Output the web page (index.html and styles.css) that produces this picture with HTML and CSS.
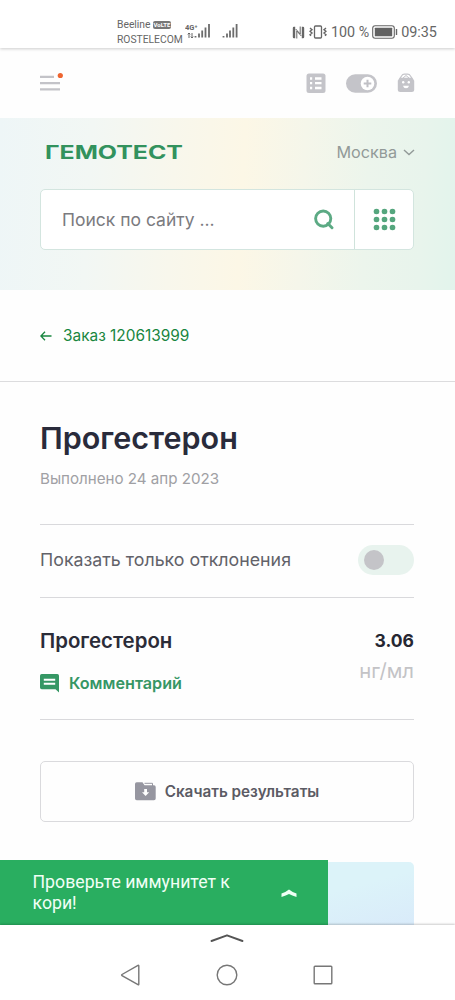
FILE: index.html
```html
<!DOCTYPE html>
<html lang="ru">
<head>
<meta charset="utf-8">
<title>Гемотест</title>
<link rel="stylesheet" href="styles.css">
</head>
<body>
<div class="phone">
  <div class="status">
    <div class="carriers">
      <div class="carrier">Beeline <span class="volte">VoLTE</span></div>
      <div class="carrier second">ROSTELECOM</div>
    </div>
    <svg class="signals" width="54" height="18" viewBox="0 0 54 18">
      <text x="0" y="7" class="net">4G⁺</text>
      <path d="M4 10v5M2.7 11.3 4 10l1.3 1.3M7 10v5M5.700 13.700 7 15l1.300-1.300" fill="none" stroke="#666" stroke-width="1"/>
      <path d="M10.500 13v1.500M14 10.500v4M17.200 7.500v7M20.500 4.500v10M24 1v13.500M38.500 13v1.500M42 10.500v4M45 7.500v7M48.300 4.500v10M51.600 1v13.500" stroke="#6c6c6c" stroke-width="1.800"/>
    </svg>
    <div class="status-right">
      <svg width="13" height="13" viewBox="0 0 13 13"><path d="M3.200.8H2Q.8.800.8 2v9Q.8 12.200 2 12.200h1.200zM9.800 12.200H11q1.200 0 1.200-1.200V2Q12.200.8 11 .8H9.800z" fill="#666"/><path d="M4.800 12.500V5l4.500 5M8.200.5V8L3.700 3" fill="none" stroke="#666" stroke-width="1"/></svg>
      <svg width="18" height="14" viewBox="0 0 18 14"><rect x="5.500" y="1" width="7" height="12" rx="1" fill="none" stroke="#666" stroke-width="1.300"/><path d="M1 3l2 1.700-2 1.600 2 1.700-2 1.700 1 1M17 3l-2 1.700 2 1.600-2 1.700 2 1.700-1 1" fill="none" stroke="#666" stroke-width="1.400"/></svg>
      <span class="pct">100 %</span>
      <svg width="26" height="14" viewBox="0 0 26 14"><rect x=".7" y=".7" width="21.600" height="12.600" rx="2.500" fill="none" stroke="#666" stroke-width="1.100"/><rect x="2.800" y="2.800" width="17.400" height="8.400" rx=".5" fill="#626262"/><path d="M24.500 4v6" stroke="#666" stroke-width="1.400"/></svg>
      <span class="clock">09:35</span>
    </div>
  </div>

  <header class="topbar">
    <svg width="26" height="22" viewBox="0 0 26 22"><path d="M0 4.800h14M0 11.100h20M0 17.400h20" stroke="#c3c3c8" stroke-width="2.200"/><circle cx="20.300" cy="3.500" r="2.600" fill="#ee6530"/></svg>
    <div class="tools">
      <svg width="20" height="21" viewBox="0 0 20 21"><rect x=".5" y=".5" width="19" height="19.500" rx="2.500" fill="#c4c4c9"/><path d="M4 5.500h2.200M4 10.200h2.200M4 15h2.200M9 5.500h6.500M9 10.200h6.500M9 15h6.500" stroke="#fff" stroke-width="2.300"/></svg>
      <svg width="31" height="19" viewBox="0 0 31 19"><rect x="0" y=".3" width="31" height="18.400" rx="9.200" fill="#c4c4c9"/><circle cx="21.500" cy="9.500" r="6.800" fill="#fff"/><path d="M17.700 9.500h7.600M21.500 5.700v7.600" stroke="#c0c0c5" stroke-width="2"/></svg>
      <svg width="18" height="20" viewBox="0 0 18 20"><path d="M3 5.500 4.500 3Q5.500 1.200 7.500 1.200h3Q12.500 1.200 13.500 3L15 5.500" fill="none" stroke="#c4c4c9" stroke-width="1.200"/><path d="M6 5 9 2.500 12 5" fill="none" stroke="#c4c4c9" stroke-width="1"/><path d="M2.500 4.800h13l1.700 3v8.700q0 2.500-2.500 2.500H3.300Q.8 19 .8 16.500V7.800z" fill="#c4c4c9"/><circle cx="6.200" cy="9.300" r="1.200" fill="#fff"/><circle cx="11.800" cy="9.300" r="1.200" fill="#fff"/><path d="M6 12.700h6q-.6 2.600-3 2.600t-3-2.600z" fill="#fff"/></svg>
    </div>
  </header>

  <section class="hero">
    <div class="brand-row">
      <svg class="logo" width="142" height="22" viewBox="0 0 142 22"><text x="1" y="18" textLength="138" lengthAdjust="spacingAndGlyphs">ГЕМОТЕСТ</text></svg>
      <div class="city"><span class="city-name">Москва</span><svg width="12" height="7" viewBox="0 0 12 7"><path d="M1 1l5 4.500L11 1" fill="none" stroke="#929a98" stroke-width="1.400"/></svg></div>
    </div>
    <div class="search">
      <div class="search-main">
        <span class="placeholder">Поиск по сайту ...</span>
        <svg width="20" height="21" viewBox="0 0 20 21"><circle cx="9.200" cy="9.600" r="7.600" fill="none" stroke="#5caa84" stroke-width="2.900"/><path d="M13.800 14.500 18 18.700" stroke="#5caa84" stroke-width="2.900" stroke-linecap="round"/></svg>
      </div>
      <div class="search-grid"><i></i><i></i><i></i><i></i><i></i><i></i><i></i><i></i><i></i></div>
    </div>
  </section>

  <nav class="back">
    <svg width="12" height="10" viewBox="0 0 12 10"><path d="M11.500 5H1M5 .8.900 5 5 9.200" fill="none" stroke="#19863f" stroke-width="1.300"/></svg>
    <span class="order">Заказ 120613999</span>
  </nav>

  <main class="content">
    <h1 class="title"><span>Прогестерон</span></h1>
    <div class="date"><span>Выполнено 24 апр 2023</span></div>
    <div class="filter">
      <span class="filter-label">Показать только отклонения</span>
      <span class="switch"><span class="knob"></span></span>
    </div>
    <div class="result">
      <div class="result-left">
        <div class="name"><span>Прогестерон</span></div>
        <div class="comment">
          <svg width="19" height="19" viewBox="0 0 19 19"><path d="M1.700 0h15.600Q19 0 19 1.700V18.500L15.500 15.200H1.700Q0 15.200 0 13.500V1.700Q0 0 1.700 0z" fill="#359764"/><path d="M3.800 5.700h11.400M3.800 9.700h11.400" stroke="#fff" stroke-width="1.900"/></svg>
          <span class="comment-text">Комментарий</span>
        </div>
      </div>
      <div class="result-right">
        <div class="value">3.06</div>
        <div class="unit">нг/мл</div>
      </div>
    </div>
    <div class="download">
      <svg width="21" height="19" viewBox="0 0 21 19"><path d="M0 2Q0 .3 1.700.3H7.500L9.500 3.300H19Q20.700 3.300 20.700 5v11.600q0 1.700-1.700 1.700H1.700Q0 18.300 0 16.600z" fill="#9696a0"/><path d="M9.500 1.300H17.500V4" fill="none" stroke="#9696a0" stroke-width="1"/><path d="M9.200 7h2.800v3.200h2.200L10.600 14 7 10.200h2.200z" fill="#fff"/></svg>
      <span class="download-text">Скачать результаты</span>
    </div>
    <div class="card"></div>
  </main>

  <div class="banner">
    <div class="banner-text">Проверьте иммунитет к<br>кори!</div>
    <svg width="16" height="9" viewBox="0 0 16 9"><path d="M.5 8V4.600Q5 3 8 .5 11 3 15.500 4.600V8Q11 6.500 8 5 5 6.500 .5 8z" fill="#eefff4"/></svg>
  </div>

  <footer class="navbar">
    <svg width="34" height="10" viewBox="0 0 34 10"><path d="M1.500 8 17 2.300 32.500 8" fill="none" stroke="#555" stroke-width="1.900" stroke-linecap="round" stroke-linejoin="round"/></svg>
    <div class="keys">
      <svg width="22" height="22" viewBox="0 0 22 22"><path d="M18.800 1.800v18.500q0 .8-.8.400L2 11.700q-.8-.6 0-1.200L18 1.400q.8-.4.800.4z" fill="none" stroke="#777" stroke-width="1.400"/></svg>
      <svg width="22" height="22" viewBox="0 0 22 22"><circle cx="11" cy="11" r="9.800" fill="none" stroke="#777" stroke-width="1.400"/></svg>
      <svg width="22" height="22" viewBox="0 0 22 22"><rect x="2.200" y="2.200" width="17.600" height="17.600" rx=".8" fill="none" stroke="#777" stroke-width="1.400"/></svg>
    </div>
  </footer>
</div>
</body>
</html>
```

FILE: styles.css
```css
* { box-sizing: border-box; }
body { margin: 0; background: #fefefe; font-family: Inter, "Noto Sans", sans-serif; }
svg { display: block; flex: none; }
.phone { position: relative; width: 455px; height: 1000px; overflow: hidden; white-space: nowrap; }

.status { height: 48px; margin-bottom: 2px; display: flex; align-items: flex-start; padding: 18px 0 0 117px; box-shadow: 0 1px 3px rgba(0,0,0,.2); background: #fff; font-family: Roboto, sans-serif; color: #666; }
.carriers { width: 68px; font-size: 10.3px; }
.carrier { height: 14px; line-height: 14px; display: flex; align-items: center; gap: 2px; }
.second { padding-top: 1px; }
.volte { background: #777; color: #fff; border-radius: 2px; font-size: 6px; font-weight: 700; line-height: 8px; padding: 0 1px; }
.signals { margin-top: 5px; }
.net { font: 700 7.500px Roboto, sans-serif; fill: #666; }
.status-right { display: flex; align-items: center; height: 16px; margin: 6px 0 0 53px; }
.status-right .pct { margin: 0 3px 0 4px; font-size: 14.3px; }
.status-right svg + svg { margin-left: 4px; }
.clock { margin-left: 3px; font-size: 14.4px; }

.topbar { height: 68px; display: flex; align-items: center; justify-content: space-between; padding: 0 40px 2px 40px; }
.tools { display: flex; align-items: center; gap: 20px; }

.hero { height: 172px; padding: 18px 41px 0 40px; background: linear-gradient(93deg, #eef6f7 0%, #f2f7f4 20%, #f8f7ec 38%, #fcf7e6 53%, #f5f6ea 66%, #ecf5ec 80%, #e8f4ec 92%, #e2f4ec 100%); }
.brand-row { height: 32px; display: flex; align-items: center; justify-content: space-between; padding-left: 4px; }
.logo text { font: 700 19px Inter, sans-serif; fill: #32925d; }
.city { display: flex; align-items: center; gap: 6px; margin-right: -1px; font-size: 16.2px; color: #929a98; }
.search { height: 61px; margin-top: 21px; display: flex; background: #fff; border: 1px solid #d3e5df; border-radius: 5px; }
.search-main { flex: 1; display: flex; align-items: center; justify-content: space-between; padding: 0 20px 0 21px; }
.placeholder { font-size: 17.5px; color: #7b7b7f; }
.search-grid { width: 59px; border-left: 1px solid #cfe3db; display: grid; grid-template-columns: repeat(3, 5px); gap: 3px; align-content: center; justify-content: center; }
.search-grid i { width: 5px; height: 5px; border-radius: 50%; background: #55a67e; box-shadow: 0 0 0 .3px #55a67e; }

.back { height: 92px; display: flex; align-items: center; gap: 11px; padding-left: 40px; border-bottom: 1px solid #dcdcde; color: #19863f; font-size: 15.4px; }

.content { padding: 36px 41px 0 40px; }
.title { margin: 0; height: 40px; line-height: 40px; font-size: 30.500px; font-weight: 600; color: #292b3b; }
.date { height: 67px; padding-top: 9px; line-height: 24px; font-size: 15.15px; color: #a0a0a4; border-bottom: 1px solid #d9d9dc; }
.filter { height: 73px; display: flex; align-items: center; justify-content: space-between; padding-bottom: 2px; border-bottom: 1px solid #d9d9dc; }
.filter-label { padding-bottom: 1px; font-size: 17.8px; color: #626269; }
.switch { width: 56px; height: 30px; border-radius: 15px; background: #e8f3ee; padding: 5px 6px; }
.knob { display: block; width: 20px; height: 20px; border-radius: 50%; background: #c4c4c8; }
.result { height: 122px; display: flex; justify-content: space-between; padding-top: 28px; border-bottom: 1px solid #d9d9dc; }
.name { height: 30px; line-height: 30px; font-size: 20.400px; font-weight: 600; color: #2b2c38; }
.comment { height: 24px; margin-top: 15px; display: flex; align-items: center; gap: 10px; color: #369665; font-size: 16.2px; font-weight: 600; }
.result-right { text-align: right; }
.value { height: 30px; line-height: 30px; font-size: 17.500px; font-weight: 700; color: #262732; }
.unit { height: 30px; line-height: 30px; font-size: 20.300px; color: #c3c3c6; }
.download { height: 61px; margin-top: 41px; display: flex; align-items: center; justify-content: center; gap: 9px; border: 1px solid #dadadd; border-radius: 5px; color: #5b5b64; font-size: 15.25px; font-weight: 600; }
.card { height: 80px; margin-top: 40px; border-radius: 5px; background: linear-gradient(165deg, #dcf3f9 60%, #d8e8fa); }

/* Promo banner and system keys stay above the scrolled page. */
.banner { position: absolute; left: 0; top: 860px; width: 328px; height: 66px; padding: 0 31px 0 32.500px; display: flex; align-items: center; justify-content: space-between; background: #29ae60; color: #f1fff6; font: 17.7px/21px Roboto, sans-serif; }
.navbar { position: absolute; left: 0; top: 925px; width: 455px; height: 75px; padding: 8px 1px 0 0; background: #fff; box-shadow: 0 -1px 2px rgba(0,0,0,.2); display: flex; flex-direction: column; align-items: center; }
.keys { margin-top: 21px; display: flex; gap: 74px; }
```
